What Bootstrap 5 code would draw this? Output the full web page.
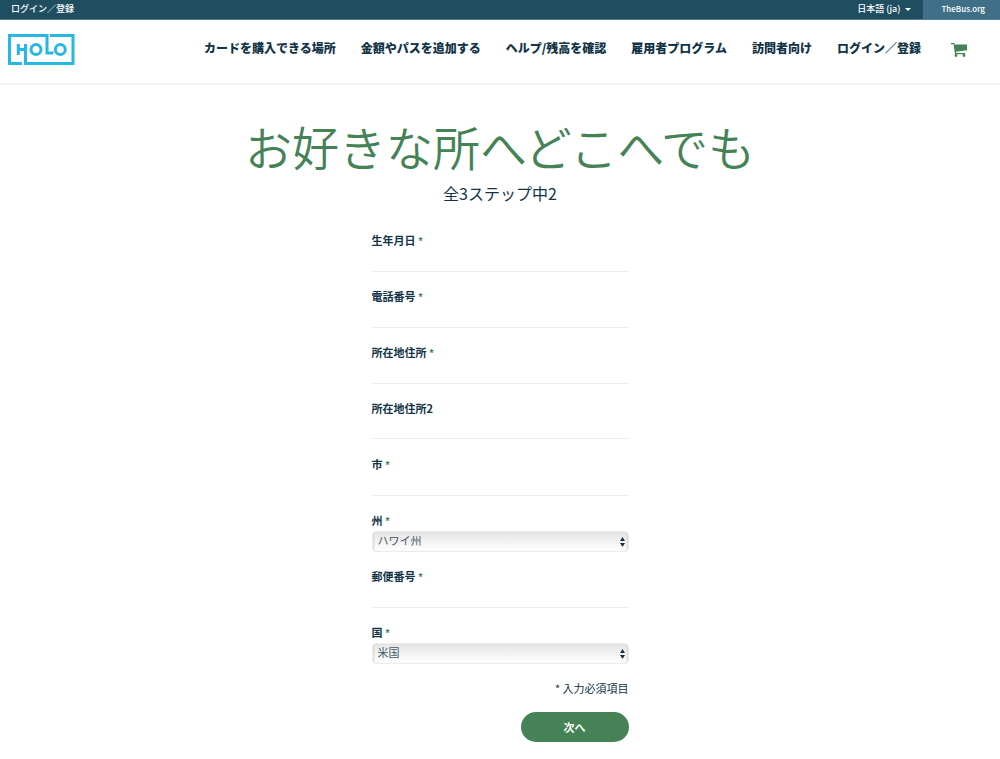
<!DOCTYPE html>
<html lang="ja">
<head>
<meta charset="utf-8">
<meta name="viewport" content="width=device-width, initial-scale=1">
<title>HOLO</title>
<link href="https://cdn.jsdelivr.net/npm/bootstrap@5.3.0/dist/css/bootstrap.min.css" rel="stylesheet">
<style>
  :root { --ink: #123447; --brand-green: #458256; --line: #ebebeb; }
  body { font-family: "Noto Sans CJK JP", sans-serif; font-size: 11px; line-height: 16px; color: var(--ink); }
  a { color: inherit; text-decoration: none; }
  .topbar { background: #204e61; color: #fff; font-size: 9px; font-weight: 500; line-height: 17px; padding-left: 11px; border-bottom: 1px solid #5a7d8d; }
  .topbar a, .topbar button { padding-bottom: 2px; }
  .topbar .lang { font-size: 9px; line-height: 17px; padding: 0 12px 2px; border: 0; color: #fff; font-weight: 500; }
  .topbar .lang::after { margin-left: 5px; vertical-align: 1px; border-width: 3px 3px 0; }
  .topbar .bus { background: #3f7088; font-size: 8px; padding: 0 15px 2px 18px; }
  .site-header { border-bottom: 2px solid #f2f2f2; padding: 14px 33px 17px 8px; }
  .main-menu { gap: 25px; font-size: 12px; font-weight: 900; line-height: 18px; padding-top: 5px; }
  .cart { padding: 3px 0 0 5px; }
  h1 { color: var(--brand-green); font-size: 47px; font-weight: 350; line-height: 60px; margin: 31px 0 0; }
  .step { font-size: 16px; line-height: 24px; margin: 5px 0 26px; }
  .signup { max-width: 257px; }
  .field { height: 56px; }
  .field label { display: block; font-weight: 700; line-height: 18px; }
  .req { color: var(--brand-green); font-weight: 700; font-size: 10px; }
  .field .form-control { height: 22px; padding: 0 5px; border: 0; border-bottom: 1px solid var(--line); border-radius: 0; font-size: 11px; color: var(--ink); background: transparent; }
  .select-box { position: relative; margin-top: 1px; }
  .select-box svg { position: absolute; right: 4px; top: 6px; pointer-events: none; }
  .field .form-select { height: 21px; padding: 0 20px 3px 5px; font-size: 11px; line-height: 17px; color: #3d5867; border: 1px solid #ececec; border-radius: 4px; background: linear-gradient(#e5e5e5, #fff); box-shadow: inset 2px 0 2px -1px #d4d4d4, inset -2px 0 2px -1px #d4d4d4; }
  .note { margin: 1px 0 16px; }
  .next { background: var(--brand-green); color: #fff; font-size: 11px; font-weight: 700; line-height: 16px; width: 108px; padding: 7px 0; border: 0; border-radius: 15px; }
  .next:hover { background: #386c47; color: #fff; }
</style>
</head>
<body>
<div class="topbar d-flex justify-content-between">
  <a href="#">ログイン／登録</a>
  <div class="d-flex">
    <button type="button" class="btn lang dropdown-toggle rounded-0">日本語 (ja)</button>
    <a class="bus" href="#">TheBus.org</a>
  </div>
</div>
<header class="site-header d-flex justify-content-between align-items-start">
  <a href="#" aria-label="HOLO">
    <svg class="d-block" width="67" height="32" viewBox="0 0 67 32" fill="none" stroke="#27b7e5" stroke-width="3">
      <path d="M14 29.500H1.500V1.500H39v17.500h6.500M42 1.500h23v28H17.500V10M10.300 10v11M10.300 15.500h7.200"/>
      <circle cx="28" cy="15.500" r="5"/><circle cx="52.300" cy="15.500" r="5"/>
    </svg>
  </a>
  <nav class="main-menu d-flex text-nowrap">
    <a href="#">カードを購入できる場所</a>
    <a href="#">金額やパスを追加する</a>
    <a href="#">ヘルプ/残高を確認</a>
    <a href="#">雇用者プログラム</a>
    <a href="#">訪問者向け</a>
    <a href="#">ログイン／登録</a>
    <a class="cart" href="#" aria-label="カート">
      <svg class="d-block" width="16" height="16" viewBox="0 0 16 16" fill="#458256">
        <path d="M0 1h3.200l.5 1.500H16v5.700l-11 1.500.2 1.300H14v1.300H4L2.500 2.300H0z"/><circle cx="5" cy="13.500" r="1.400"/><circle cx="13" cy="13.500" r="1.400"/>
      </svg>
    </a>
  </nav>
</header>
<main class="container text-center">
  <h1>お好きな所へどこへでも</h1>
  <p class="step">全3ステップ中2</p>
  <form class="signup mx-auto text-start">
    <div class="field"><label for="dob">生年月日 <span class="req">*</span></label><input id="dob" class="form-control" type="text"></div>
    <div class="field"><label for="phone">電話番号 <span class="req">*</span></label><input id="phone" class="form-control" type="tel"></div>
    <div class="field"><label for="addr1">所在地住所 <span class="req">*</span></label><input id="addr1" class="form-control" type="text"></div>
    <div class="field"><label for="addr2">所在地住所2</label><input id="addr2" class="form-control" type="text"></div>
    <div class="field"><label for="city">市 <span class="req">*</span></label><input id="city" class="form-control" type="text"></div>
    <div class="field"><label for="state">州 <span class="req">*</span></label>
      <div class="select-box"><select id="state" class="form-select"><option>ハワイ州</option></select>
        <svg width="5" height="10" viewBox="0 0 5 10" fill="#123447"><path d="M0 4 2.500 0 5 4zM0 6h5L2.500 10z"/></svg></div></div>
    <div class="field"><label for="zip">郵便番号 <span class="req">*</span></label><input id="zip" class="form-control" type="text"></div>
    <div class="field"><label for="country">国 <span class="req">*</span></label>
      <div class="select-box"><select id="country" class="form-select"><option>米国</option></select>
        <svg width="5" height="10" viewBox="0 0 5 10" fill="#123447"><path d="M0 4 2.500 0 5 4zM0 6h5L2.500 10z"/></svg></div></div>
    <p class="note text-end">* 入力必須項目</p>
    <div class="text-end"><button type="submit" class="btn next">次へ</button></div>
  </form>
</main>
<script src="https://cdn.jsdelivr.net/npm/bootstrap@5.3.0/dist/js/bootstrap.bundle.min.js"></script>
</body>
</html>
